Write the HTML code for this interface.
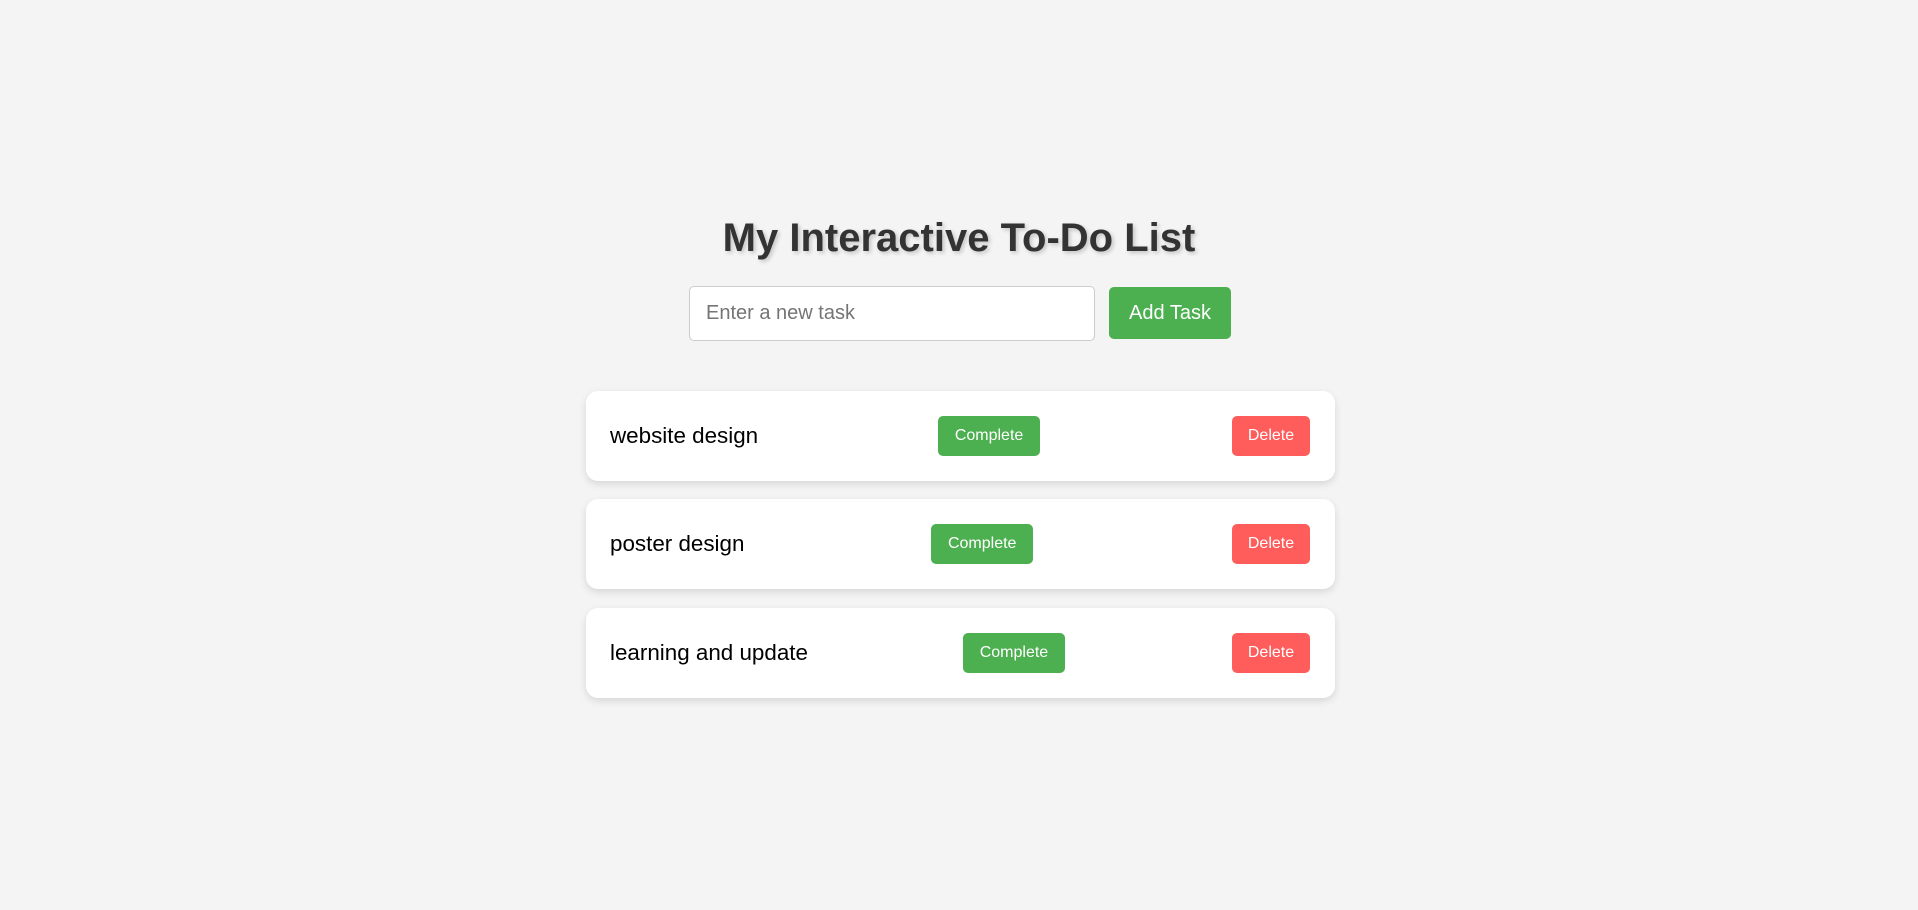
<!DOCTYPE html>
<html><head><meta charset="utf-8"><style>
html,body{margin:0;padding:0;background:#f4f4f4;width:1918px;height:910px;overflow:hidden;font-family:"Liberation Sans",Arial,sans-serif}
h1{position:absolute;left:0;width:1918px;top:213px;margin:0;text-align:center;font-size:40px;line-height:50px;color:#333;font-weight:bold;text-shadow:2px 2px 4px rgba(0,0,0,0.2)}
.inp{position:absolute;left:689px;top:286px;width:404px;height:53px;border:1px solid #ccc;border-radius:5px;background:#fff;box-sizing:content-box}
.inp span{position:absolute;left:16px;top:15px;font-size:20px;color:#757575}
.add{position:absolute;left:1109px;top:287px;width:122px;height:52px;background:#4caf50;border-radius:5px;color:#fff;font-size:20px;line-height:52px;text-align:center}
.card{position:absolute;left:586px;width:749px;height:90px;background:#fff;border-radius:12px;box-shadow:0 3px 8px rgba(0,0,0,0.12);display:flex;align-items:center;justify-content:space-between;padding:0 25px 0 24px;box-sizing:border-box}
.card .t{font-size:22.4px;color:#000}
.b{height:40px;line-height:40px;border-radius:5px;color:#fff;font-size:16px;text-align:center}
.c{background:#4caf50;width:102px;margin-right:12px}
.d{background:#ff5c5c;width:78px}
</style></head><body>
<h1>My Interactive To-Do List</h1>
<div class="inp"><span>Enter a new task</span></div>
<div class="add">Add Task</div>
<div class="card" style="top:391px"><span class="t">website design</span><span class="b c">Complete</span><span class="b d">Delete</span></div>
<div class="card" style="top:499px"><span class="t">poster design</span><span class="b c">Complete</span><span class="b d">Delete</span></div>
<div class="card" style="top:608px"><span class="t">learning and update</span><span class="b c">Complete</span><span class="b d">Delete</span></div>
</body></html>
